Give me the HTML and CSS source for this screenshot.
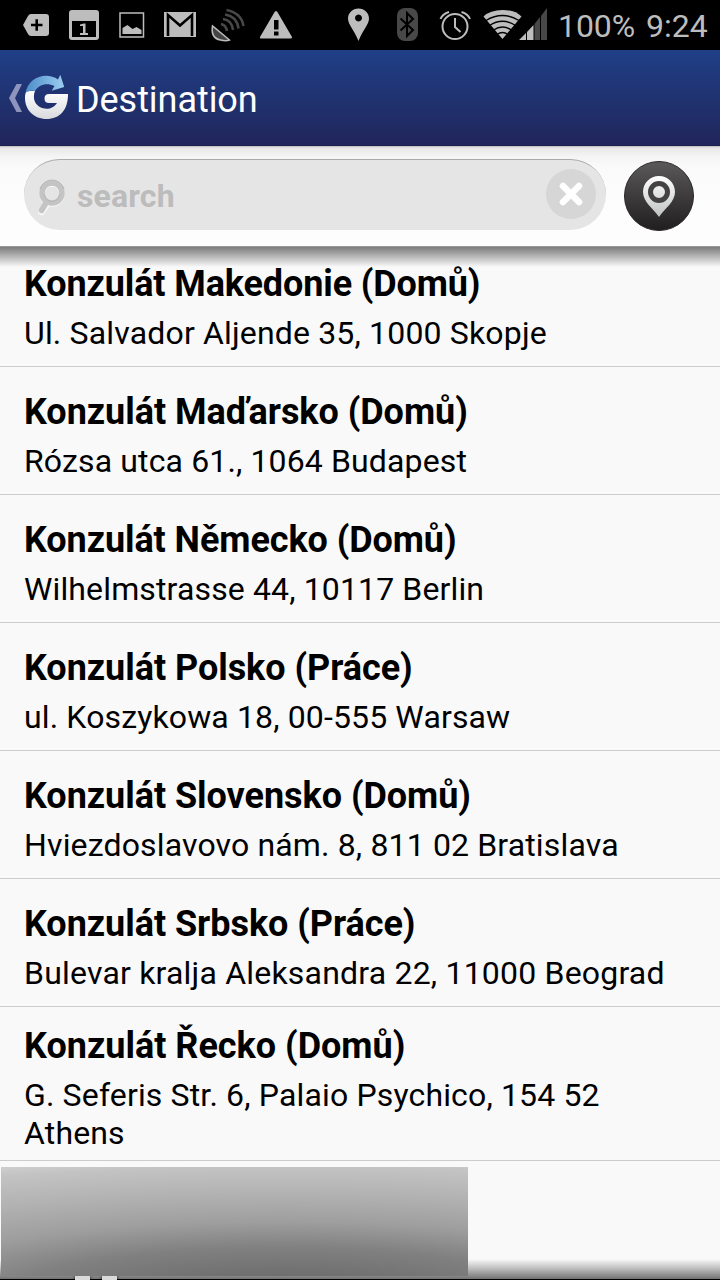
FILE: index.html
```html
<!DOCTYPE html>
<html lang="en">
<head>
<meta charset="utf-8">
<title>Destination</title>
<link rel="stylesheet" href="styles.css">
</head>
<body>
<div class="screen">
  <div class="status">
    <svg class="status-icons" width="560" height="50" viewBox="0 0 560 50" fill="#bdbdbd">
      <path d="M23 25l5-9q1-2 3-2h15q3 0 3 3v16q0 3-3 3H31q-2 0-3-2z"/>
      <path d="M31 25h11.500M36.700 19.200v11.600" stroke="#000" stroke-width="2.600"/>
      <path fill-rule="evenodd" d="M72 10h24q3 0 3 3v24q0 3-3 3H72q-3 0-3-3V13q0-3 3-3zM72 21v16h24V21z"/>
      <path d="M80 24.500l4-1h1.500V33H88v2h-8v-2h3v-7h-3z"/>
      <path d="M120 13h23.500v24H120z" fill="none" stroke="#bdbdbd" stroke-width="1.500"/>
      <path d="M122.500 34v-6l5-3 5 4 4-2 5 3v4z"/>
      <path d="M164 12h32v25h-32z"/>
      <path d="M168 36V15l12 10.500L192 15v21" fill="none" stroke="#000" stroke-width="2.600"/>
      <path d="M212.500 26q-2 12 8 14 6 1.500 9 0z" fill="#444" stroke="#bdbdbd" stroke-width="1.500"/>
      <g fill="none" stroke="#484848" stroke-width="2.500">
        <path d="M221 24q5 1 6 7M223 19q9 1 10 11M225 14.500q12 2 13.500 14M226.500 10q15 3 17 16"/>
      </g>
      <path d="M276 11q1 0 2 2l14 24q0 1-1 1.500h-30q-1.500 0-1-1.500l14-24q1-2 2-2z"/>
      <path d="M274 20h4.500v9.500H274zM274 31.500h4.500v4H274z" fill="#000"/>
      <path fill-rule="evenodd" d="M358.500 8.500c6 0 10.500 4.500 10.500 10 0 6-6 11-10.500 22.500C354 29.500 348 24.500 348 18.500c0-5.500 4.500-10 10.500-10zm0 6a3.500 3.500 0 1 0 .01 0z"/>
      <rect x="397" y="8" width="21" height="33" rx="8" fill="#484848"/>
      <path d="M400.500 18.500L413 30l-6 6V13l6 6-12.500 11.500" fill="none" stroke="#000" stroke-width="2"/>
      <g fill="none" stroke="#bdbdbd" stroke-width="2">
        <circle cx="455" cy="26.500" r="12.500"/>
        <path d="M455 18v9l5.500 5M440.500 19q2-5 8.500-7M470 19q-2-5-8.500-7"/>
      </g>
      <path d="M502.500 39L483.500 16.500Q490 10 502.500 10t19 6.500z"/>
      <g fill="none" stroke="#000" stroke-width="1.400">
        <path d="M486 20.500q16.500-10 33 0M489.500 25.500q13-8.500 26 0M493.500 30q9-6 18 0M497 34.500q5.500-4 11 0"/>
      </g>
      <path d="M519 40l7-7v7zM527 32l6.500-7v15H527z"/>
      <path d="M534.500 24l5.500-7v23h-5.500zM541 16l6-8v32h-6z" fill="#484848"/>
    </svg>
    <span class="battery">100%</span>
    <span class="clock">9:24</span>
  </div>
  <header class="bar">
    <svg class="logo" width="72" height="96" viewBox="0 50 72 96">
      <defs>
        <linearGradient id="silver" x1="0" y1="0" x2="0" y2="1"><stop offset="0" stop-color="#fff"/><stop offset="1" stop-color="#d8dadd"/></linearGradient>
        <linearGradient id="sky" x1="0" y1="0" x2="1" y2="0"><stop offset="0" stop-color="#4d8dca"/><stop offset="1" stop-color="#9bcdf0"/></linearGradient>
      </defs>
      <path d="M16.500 84H22l-7 14 7 14h-5.500L9 98z" fill="#8d94bd"/>
      <path d="M35 91C33.500 94 33.500 99 35 102C39 110 52 111.500 57 103H49Q44.500 103 44.500 98.500T49 94H68C68 110 60 119 46.500 119C34 119 25 110 25 98Q25 94 26 92C28 90.500 33 91 35 91Z" fill="url(#silver)"/>
      <path d="M25.500 93C28 77.500 46 71 58 79.500L60.300 74.700L64.200 87L51.700 90.700L54.500 86C47 82.500 39 84 35 91C32 90.500 28 90.500 25.500 93Z" fill="url(#sky)"/>
    </svg>
    <h1 class="title">Destination</h1>
  </header>
  <div class="search-bar">
    <div class="field">
      <svg class="lens" width="30" height="40" viewBox="36 177 30 40" fill="none">
        <path d="M46.500 206l-5 7" stroke="#f6f6f6" stroke-width="6.500" stroke-linecap="round"/>
        <circle cx="52" cy="195" r="10" stroke="#f6f6f6" stroke-width="5.500"/>
        <path d="M46 204l-4.500 7.500" stroke="#c4c4c4" stroke-width="5.500" stroke-linecap="round"/>
        <circle cx="52" cy="194" r="10" stroke="#c4c4c4" stroke-width="5.500"/>
        <path d="M40 190a12.500 12.500 0 0 1 24 0" stroke="#b0b0b0" stroke-width=".8"/>
        <path d="M44.500 195a7.500 7.500 0 0 0 15 0" stroke="#b2b2b2" stroke-width=".8"/>
      </svg>
      <span class="placeholder">search</span>
      <span class="clear"><svg width="50" height="50" viewBox="0 0 50 50"><path d="M17 17l16 16M33 17L17 33" stroke="#fff" stroke-width="6.600" stroke-linecap="round"/></svg></span>
    </div>
    <svg class="locate" width="70" height="70" viewBox="0 0 70 70">
      <defs>
        <linearGradient id="dark" x1="0" y1="0" x2="0" y2="1"><stop offset="0" stop-color="#5b5959"/><stop offset="1" stop-color="#201e1f"/></linearGradient>
        <linearGradient id="pin" x1="0" y1="0" x2="0" y2="1"><stop offset="0" stop-color="#fff"/><stop offset="1" stop-color="#bfc1c1"/></linearGradient>
      </defs>
      <circle cx="35" cy="35" r="34.500" fill="url(#dark)" stroke="#292728"/>
      <path d="M35 15c9 0 16 7 16 16 0 10-10 16-16 25-6-9-16-15-16-25 0-9 7-16 16-16z" fill="url(#pin)"/>
      <circle cx="35" cy="31" r="8.500" fill="none" stroke="#444243" stroke-width="5"/>
    </svg>
  </div>
  <main class="list">
    <section class="row first"><h2><span class="n1">Konzulát Makedonie (Domů)</span></h2><p><span class="a1">Ul. Salvador Aljende 35, 1000 Skopje</span></p></section>
    <section class="row"><h2><span class="n2">Konzulát Maďarsko (Domů)</span></h2><p><span class="a2">Rózsa utca 61., 1064 Budapest</span></p></section>
    <section class="row"><h2><span class="n3">Konzulát Německo (Domů)</span></h2><p><span class="a3">Wilhelmstrasse 44, 10117 Berlin</span></p></section>
    <section class="row"><h2><span class="n4">Konzulát Polsko (Práce)</span></h2><p><span class="a4">ul. Koszykowa 18, 00-555 Warsaw</span></p></section>
    <section class="row"><h2><span class="n5">Konzulát Slovensko (Domů)</span></h2><p><span class="a5">Hviezdoslavovo nám. 8, 811 02 Bratislava</span></p></section>
    <section class="row"><h2><span class="n6">Konzulát Srbsko (Práce)</span></h2><p><span class="a6">Bulevar kralja Aleksandra 22, 11000 Beograd</span></p></section>
    <section class="row tall"><h2><span class="n7">Konzulát Řecko (Domů)</span></h2><p><span class="a7">G. Seferis Str. 6, Palaio Psychico, 154 52<br>Athens</span></p></section>
    <div class="top-shade"></div>
    <div class="bottom-shade"></div>
    <div class="panel"></div>
    <div class="handle left"></div>
    <div class="handle right"></div>
  </main>
</div>
</body>
</html>
```
FILE: styles.css
```css
* { box-sizing: border-box; }
body { margin: 0; font-family: Roboto, sans-serif; }
h1, h2, p { margin: 0; font-weight: 400; }
svg { display: block; flex: none; }
.screen { width: 720px; height: 1280px; display: flex; flex-direction: column; overflow: hidden; background: #f9f9f9; }
.status { height: 50px; flex: none; display: flex; align-items: center; background: #000; color: #bdbdbd; font-size: 32px; white-space: nowrap; }
.status-icons { margin-right: -2px; }
.battery { width: 88px; letter-spacing: -0.1px; padding-top: 1px; }
.clock { padding-top: 1px; }
.bar { height: 96px; flex: none; display: flex; align-items: center; background: linear-gradient(#203f87, #20265b); color: #fff; border-bottom: 1px solid #1b1f55; }
.title { font-size: 36px; line-height: 48px; margin: 4px 0 0 4px; letter-spacing: -0.05px; }
.search-bar { height: 101px; flex: none; display: flex; align-items: flex-start; padding: 13px 26px 0 24px; justify-content: space-between; background: linear-gradient(#bbb 0, #e8e8e8 2px, #f4f4f4 10px, #fafafa 20px, #fdfdfd 60px); border-bottom: 1px solid #999; }
.field { width: 582px; height: 71px; border-radius: 36px; display: flex; align-items: center; background: #e5e5e5; border-top: 1px solid #aaa; padding: 0 10px 0 12px; }
.lens { margin-top: 2px; }
.placeholder { margin: 2px auto 0 11px; font-size: 32px; font-weight: 700; color: #bcbcbc; letter-spacing: 0.15px; }
.clear { width: 50px; height: 50px; border-radius: 50%; background: #d6d6d6; margin-top: -2px; }
.locate { margin-top: 2px; }
.list { position: relative; flex: 1; min-height: 0; }
.row { height: 128px; padding: 14px 24px; border-bottom: 1px solid #ccc; display: flex; flex-direction: column; gap: 6px; justify-content: flex-end; color: #000; white-space: nowrap; }
.row.first { height: 120px; padding-top: 0; }
.row.tall { height: 154px; padding: 0 24px 8px; }
.row h2 { font-size: 36px; line-height: 48px; font-weight: 700; }
.row p { font-size: 32px; line-height: 38px; }
.n1 { letter-spacing: -0.12px; }
.n2, .n4, .n5, .n6 { letter-spacing: -0.04px; }
.n3 { letter-spacing: -0.08px; }
.a1 { letter-spacing: 0.165px; }
.a2, .a3, .a4 { letter-spacing: 0.135px; }
.a5, .a7 { letter-spacing: 0.15px; }
.a6 { letter-spacing: 0.2px; }
.top-shade { position: absolute; top: 0; left: 0; right: 0; height: 20px; background: linear-gradient(rgba(0,0,0,.5), rgba(0,0,0,.28) 45%, rgba(0,0,0,0)); }
.bottom-shade { position: absolute; bottom: 0; left: 0; right: 0; height: 21px; border-bottom: 1px solid #000; background: linear-gradient(rgba(0,0,0,0), rgba(0,0,0,.25) 50%, rgba(0,0,0,.54)); }
.panel { position: absolute; left: 1px; top: 920px; width: 467px; height: 109px; background: radial-gradient(ellipse 850px 150px at 60% 118%, #666 0, #6e6e6e 13%, #808080 32%, #9e9e9e 49%, #b2b2b2 68%, #c3c3c3 86%, #d2d2d2 94%); }
.handle { position: absolute; bottom: 0; width: 15px; height: 4px; background: #dadada; box-shadow: 0 0 3px #000; clip-path: inset(0 -4px 0 -4px); }
.handle.left { left: 75px; }
.handle.right { left: 102px; }
```
